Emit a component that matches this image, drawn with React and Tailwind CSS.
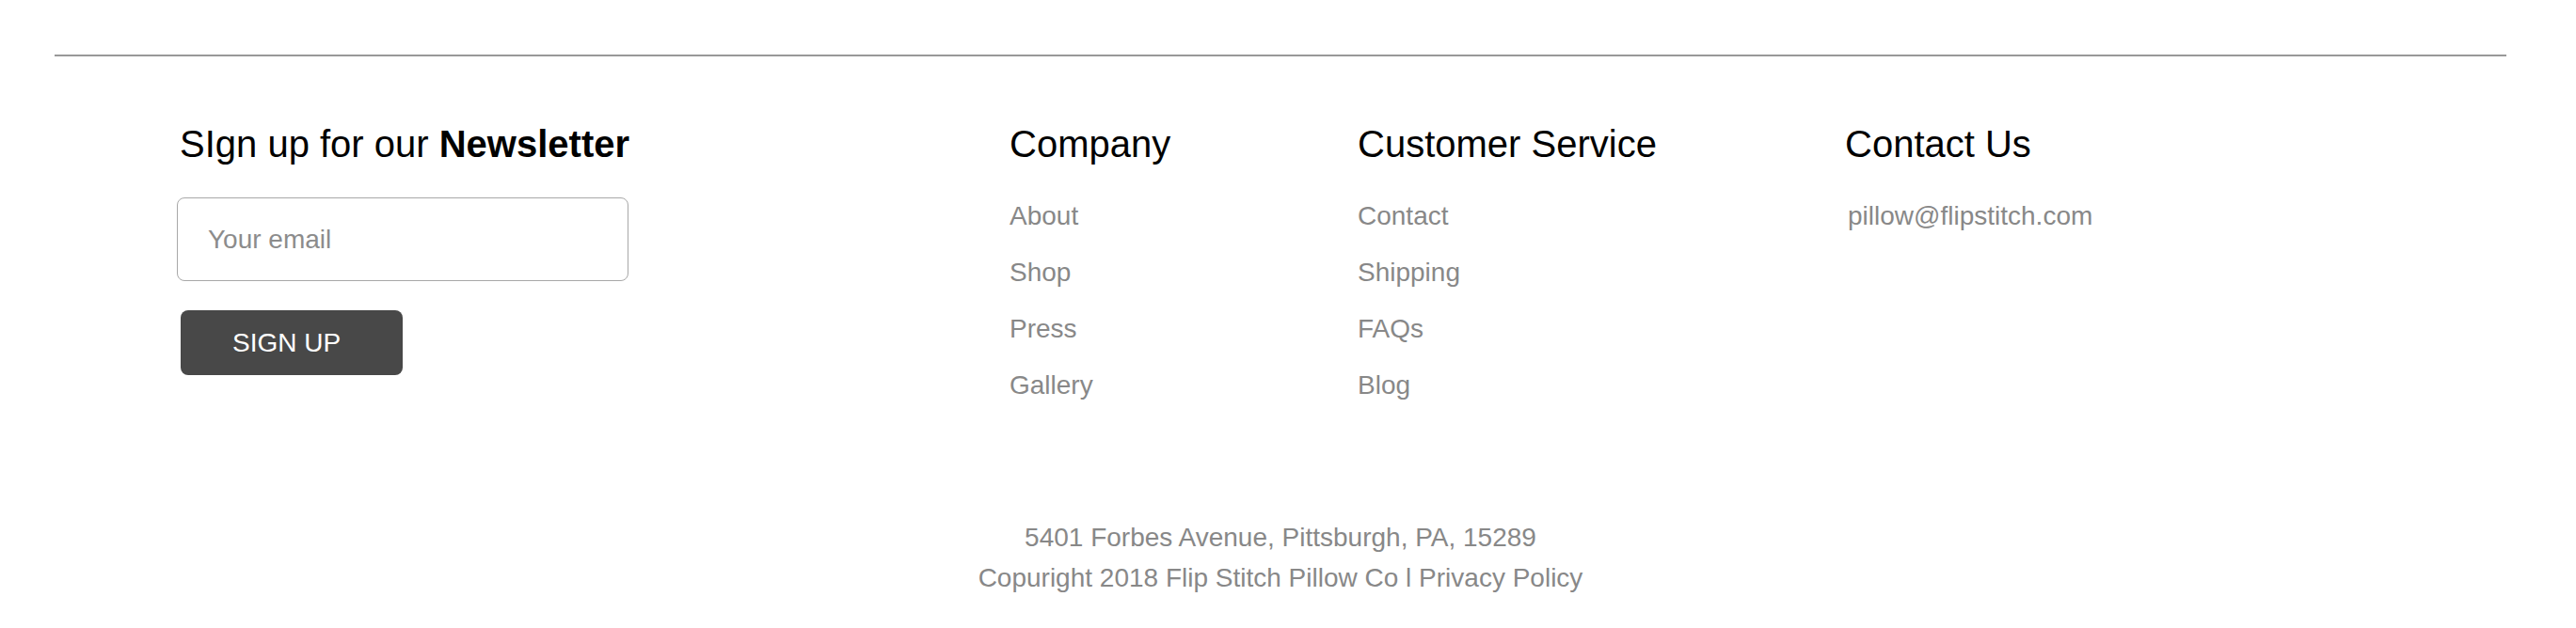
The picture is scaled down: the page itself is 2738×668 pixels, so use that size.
const companyLinks = ["About", "Shop", "Press", "Gallery"];
const serviceLinks = ["Contact", "Shipping", "FAQs", "Blog"];

const LinkColumn = ({ title, links, className }) => (
  <div className={className}>
    <h3 className="text-[40px] leading-none font-normal text-black">{title}</h3>
    <ul className="mt-[43px] flex flex-col gap-[32px]">
      {links.map((link) => (
        <li key={link}>
          <a href="#" className="block text-[28px] leading-none text-[#888888]">
            {link}
          </a>
        </li>
      ))}
    </ul>
  </div>
);

const App = () => {
  return (
    <footer className="min-h-[668px] bg-white pt-[58px] font-['Liberation_Sans',Arial,sans-serif]">
      {/* Divider */}
      <div className="ml-[58px] mr-[74px] h-[2px] bg-[#999999]" />

      <div className="mt-[73px] flex pl-[191px]">
        {/* Newsletter */}
        <div className="w-[881px] shrink-0">
          <h2 className="text-[40px] leading-none font-normal text-black">
            SIgn up for our <span className="font-bold">Newsletter</span>
          </h2>
          <input
            type="email"
            placeholder="Your email"
            className="mt-[37px] -ml-[3px] block h-[89px] w-[480px] rounded-[8px] border border-[#a8a8a8] px-[32px] text-[28px] text-black outline-none placeholder:text-[#8c8c8c]"
          />
          <button className="mt-[31px] ml-px flex h-[69px] w-[236px] items-center rounded-[8px] bg-[#484848] pl-[55px] text-[28px] leading-none text-white">
            SIGN UP
          </button>
        </div>

        <LinkColumn title="Company" links={companyLinks} className="w-[371px] shrink-0 pl-px" />
        <LinkColumn title="Customer Service" links={serviceLinks} className="w-[518px] shrink-0" />

        {/* Contact */}
        <div className="flex-1">
          <h3 className="text-[40px] leading-none font-normal text-black">Contact Us</h3>
          <a href="#" className="mt-[43px] ml-[3px] block text-[28px] leading-none text-[#888888]">
            pillow@flipstitch.com
          </a>
        </div>
      </div>

      <div className="mt-[126px] ml-[58px] mr-[74px] text-center text-[28px] leading-[43px] text-[#888888]">
        <p>5401 Forbes Avenue, Pittsburgh, PA, 15289</p>
        <p>
          Copuright 2018 Flip Stitch Pillow Co l <a href="#">Privacy Policy</a>
        </p>
      </div>
    </footer>
  );
};

export default App;
